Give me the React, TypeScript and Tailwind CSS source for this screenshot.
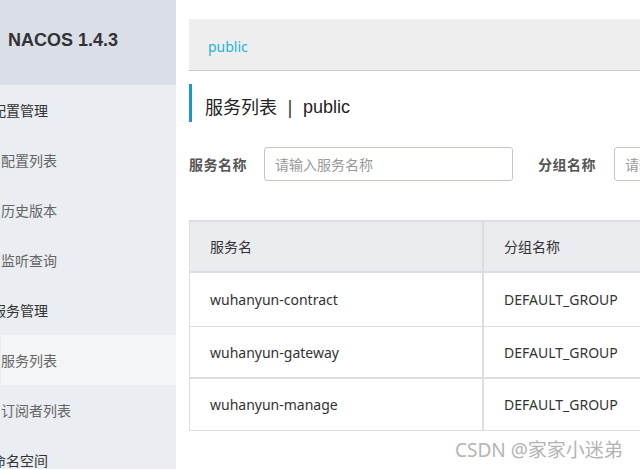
const menu = [
  { label: "配置管理", parent: true },
  { label: "配置列表" },
  { label: "历史版本" },
  { label: "监听查询" },
  { label: "服务管理", parent: true },
  { label: "服务列表", active: true },
  { label: "订阅者列表" },
  { label: "命名空间", parent: true },
];

const rows = ["wuhanyun-contract", "wuhanyun-gateway", "wuhanyun-manage"];

const font = { fontFamily: '"Noto Sans", "Noto Sans CJK SC", sans-serif' };

export default function App() {
  return (
    <div className="relative flex w-[640px] h-[469px] overflow-hidden bg-white" style={font}>
      {/* sidebar */}
      <div className="w-[176px] shrink-0 flex flex-col bg-[#eaedf1] overflow-hidden">
        <div className="h-[85px] shrink-0 bg-[#dadee6] flex items-center pl-2 pb-1">
          <span className="text-[18px] font-bold text-[#333] whitespace-nowrap font-['Liberation_Sans',sans-serif]">
            NACOS 1.4.3
          </span>
        </div>
        {menu.map((m) => (
          <div
            key={m.label}
            className={`h-[50px] shrink-0 flex items-center whitespace-nowrap text-[14px] ${
              m.active ? "bg-[#f4f5f7]" : ""
            } ${m.parent ? "-ml-2 text-[#333]" : "ml-[1px] text-[#666]"}`}
          >
            {m.label}
          </div>
        ))}
      </div>

      {/* main */}
      <div className="flex-1 min-w-0 pl-[13px] pt-[19px]">
        <div className="w-[700px]">
          <div className="h-[52px] bg-[#eeeeee] border-b border-[#cccccc] flex items-center pl-[19px] pt-[3px]">
            <span className="text-[14px] text-[#1eb4d8]">public</span>
          </div>

          <div className="mt-[13px] h-[38px] border-l-[3px] border-[#1b97cd] pl-[13px] pt-[8px] flex items-center text-[18px] text-[#222]">
            <span>服务列表</span>
            <span className="mx-[8px]">|</span>
            <span className="font-['Liberation_Sans',sans-serif]">public</span>
          </div>

          <div className="mt-[25px] h-[34px] flex items-center text-[14px]">
            <span className="w-[75px] shrink-0 font-bold text-[#555] whitespace-nowrap tracking-[0.5px]">服务名称</span>
            <div className="w-[249px] h-[34px] border border-[#c4c6cf] rounded-[3px] flex items-center px-[10px] text-[#999]">
              请输入服务名称
            </div>
            <span className="w-[76px] shrink-0 ml-[25px] font-bold text-[#555] whitespace-nowrap tracking-[0.5px]">分组名称</span>
            <div className="w-[249px] h-[34px] border border-[#c4c6cf] rounded-[3px] flex items-center px-[10px] text-[#999]">
              请输入分组名称
            </div>
          </div>

          <div className="mt-[39px] border-l border-t-2 border-b border-[#dcdde3] text-[14px] text-[#333]">
            <div className="h-[51px] flex bg-[#ebecf0] border-b-2 border-[#dcdde3]">
              <div className="w-[294px] border-r-2 border-[#dcdde3] flex items-center pl-5">服务名</div>
              <div className="flex-1 flex items-center pl-5">分组名称</div>
            </div>
            {rows.map((r, i) => (
              <div
                key={r}
                className={`flex ${
                  i === 0
                    ? "h-[54px] border-b border-[#dcdde3]"
                    : i === 1
                    ? "h-[52px] border-b-2 border-[#dcdde3]"
                    : "h-[51px]"
                }`}
              >
                <div className="w-[294px] border-r-2 border-[#dcdde3] flex items-center pl-5">{r}</div>
                <div className="flex-1 flex items-center pl-5">DEFAULT_GROUP</div>
              </div>
            ))}
          </div>
        </div>
      </div>

      <div className="absolute left-[455px] top-[436px] text-[19px] text-[#b4b4b4] whitespace-nowrap">
        CSDN @家家小迷弟
      </div>
    </div>
  );
}
